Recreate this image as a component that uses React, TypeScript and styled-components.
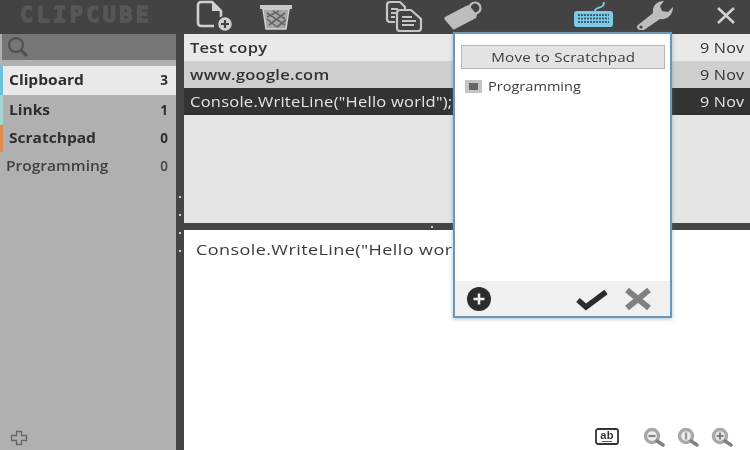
import styled, { createGlobalStyle } from "styled-components";

const GlobalStyle = createGlobalStyle`
  html, body {
    margin: 0;
    padding: 0;
    background: #fff;
  }
`;

const Window = styled.div`
  position: relative;
  display: flex;
  flex-direction: column;
  width: 750px;
  height: 450px;
  overflow: hidden;
  background: #444;
  color: #333;
  font-family: "Open Sans", "Noto Sans", sans-serif;
  filter: blur(0.7px);
`;

// the whole shot is stretched sideways, so text gets stretched with it
const Wide = styled.span<{ $x: number; $origin?: string }>`
  display: inline-block;
  white-space: nowrap;
  transform: scaleX(${(p) => p.$x});
  transform-origin: ${(p) => p.$origin ?? "left"} center;
`;

const Toolbar = styled.header`
  display: flex;
  align-items: center;
  flex: 0 0 34px;
  height: 34px;
  background: #434343;
`;

const Logo = styled.div`
  width: 194px;
  padding-left: 20px;
  box-sizing: border-box;
  color: #575757;
  font-family: "DejaVu Sans Mono", monospace;
  font-size: 22px;
  font-weight: 700;
  text-transform: uppercase;
  letter-spacing: 3.3px;
  line-height: 30px;
  margin-top: -4px;
  -webkit-text-stroke: 1.4px #575757;
`;

const ToolIcon = styled.svg<{ $left: number }>`
  flex: none;
  margin-left: ${(p) => p.$left}px;
  margin-top: -3px;
`;

const Body = styled.div`
  display: flex;
  flex: 1;
  min-height: 0;
`;

const Sidebar = styled.aside`
  display: flex;
  flex-direction: column;
  width: 176px;
  background: #b0b0b0;
`;

const Search = styled.div`
  display: flex;
  align-items: center;
  height: 26px;
  margin-left: 2px;
  padding-left: 4px;
  background: #767676;
`;

const CategoryList = styled.div`
  display: flex;
  flex-direction: column;
  margin-top: 6px;
`;

const Category = styled.div<{ $active?: boolean; $accent?: string; $height: number }>`
  display: flex;
  align-items: center;
  justify-content: space-between;
  height: ${(p) => p.$height}px;
  padding: 0 8px 1px 6px;
  box-sizing: border-box;
  border-left: ${(p) => (p.$accent ? `3px solid ${p.$accent}` : "0")};
  background: ${(p) => (p.$active ? "#e9e9e9" : "transparent")};
  color: #2e2e2e;
  font-size: 13.5px;
  font-weight: ${(p) => (p.$accent ? 700 : 600)};
  opacity: ${(p) => (p.$accent ? 1 : 0.85)};
`;

const AddCategory = styled.svg`
  margin: auto 0 4px 9px;
`;

const Main = styled.main`
  display: flex;
  flex-direction: column;
  flex: 1;
  min-width: 0;
  margin-left: 8px;
`;

const ClipList = styled.div`
  flex: 0 0 189px;
  background: #e5e5e5;
`;

const ClipRow = styled.div<{ $tone: "light" | "mid" | "dark" }>`
  display: flex;
  align-items: center;
  justify-content: space-between;
  height: 27px;
  padding: 0 0 1px 6px;
  box-sizing: border-box;
  background: ${(p) =>
    p.$tone === "dark" ? "#333" : p.$tone === "mid" ? "#cfcfcf" : "#e9e9e9"};
  color: ${(p) => (p.$tone === "dark" ? "#e4e4e4" : "#333")};
  font-size: 14px;
  font-weight: ${(p) => (p.$tone === "dark" ? 500 : 600)};
  letter-spacing: 0.2px;
`;

const ClipDate = styled.span`
  width: 50px;
  font-weight: 500;
`;

const Splitter = styled.div`
  flex: 0 0 7px;
  background: #444;
`;

const Preview = styled.section`
  display: flex;
  flex-direction: column;
  flex: 1;
  background: #fff;
  padding: 9px 0 0 12px;
  color: #3a3a3a;
  font-size: 15px;
  letter-spacing: 0.35px;
`;

const PreviewTools = styled.div`
  display: flex;
  align-items: center;
  margin-top: auto;
  padding: 0 16px 3px 0;
  justify-content: flex-end;
  gap: 10px;
`;

const Grip = styled.span<{ $y: number; $x: number }>`
  position: absolute;
  left: ${(p) => p.$x}px;
  top: ${(p) => p.$y}px;
  width: 2px;
  height: 2px;
  background: #ccc;
`;

const Popup = styled.div`
  position: absolute;
  left: 453px;
  top: 32px;
  display: flex;
  flex-direction: column;
  width: 219px;
  height: 286px;
  box-sizing: border-box;
  border: 2px solid #6a97ba;
  background: #fff;
  box-shadow: 0 1px 4px rgba(90, 130, 160, 0.5);
`;

const MoveButton = styled.div`
  display: flex;
  align-items: center;
  justify-content: center;
  height: 24px;
  margin: 11px 5px 0 6px;
  padding-bottom: 1px;
  box-sizing: border-box;
  border: 1px solid #b5b5b5;
  background: #e3e3e3;
  color: #3c3c3c;
  font-size: 13.5px;
  letter-spacing: 0.2px;
`;

const TagRow = styled.div`
  display: flex;
  align-items: center;
  gap: 6px;
  margin: 8px 0 0 10px;
  color: #3c3c3c;
  font-size: 13px;
`;

const TagBox = styled.span`
  width: 9px;
  height: 7px;
  border: 4px solid #c4c4c4;
  border-width: 3px 4px;
  background: #666;
`;

const PopupFooter = styled.div`
  display: flex;
  align-items: center;
  margin-top: auto;
  height: 35px;
  padding: 0 18px 0 11px;
  background: #f0f0f0;
`;

const FooterSpacer = styled.div`
  flex: 1;
`;

const FooterIcon = styled.svg<{ $left?: number }>`
  flex: none;
  margin-left: ${(p) => p.$left ?? 0}px;
`;

const AbIcon = styled.svg`
  margin-right: 12px;
`;

const Magnifier = ({ sign }: { sign: "-" | "0" | "+" }) => (
  <svg width="24" height="20" viewBox="0 0 24 20">
    <circle cx="10" cy="9" r="6.5" fill="#eee" stroke="#a8a8a8" strokeWidth="3.4" />
    <path d="M15 14l6 4" stroke="#808080" strokeWidth="3.5" strokeLinecap="round" />
    {sign !== "0" && <path d="M6.500 9h7" stroke="#808080" strokeWidth="2.2" />}
    {sign === "+" && <path d="M10 5.500v7" stroke="#808080" strokeWidth="2.2" />}
    {sign === "0" && <path d="M10 5.500v7" stroke="#999" strokeWidth="2.4" />}
  </svg>
);

const categories = [
  { name: "Clipboard", count: 3, accent: "#6cc3d8", active: true, height: 29 },
  { name: "Links", count: 1, accent: "#a5d6d2", height: 30 },
  { name: "Scratchpad", count: 0, accent: "#e08a4c", height: 27 },
  { name: "Programming", count: 0, height: 29 },
];

const clips: { text: string; tone: "light" | "mid" | "dark" }[] = [
  { text: "Test copy", tone: "light" },
  { text: "www.google.com", tone: "mid" },
  { text: 'Console.WriteLine("Hello world");', tone: "dark" },
];

export default function App() {
  return (
    <>
      <GlobalStyle />
      <Window>
        <Toolbar>
          <Logo>ClipCube</Logo>
          <ToolIcon $left={1} width="40" height="32" viewBox="0 0 40 32">
            <path d="M19 26H6a3 3 0 01-3-3V5a3 3 0 013-3h11l9 9v6" fill="none" stroke="#d0d0d0" strokeWidth="2.600" strokeLinejoin="round" />
            <path d="M17 3v8h8" fill="#d0d0d0" />
            <circle cx="30" cy="24" r="7.500" fill="#d0d0d0" stroke="#434343" strokeWidth="1.500" />
            <path d="M26 24h8M30 20v8" stroke="#434343" strokeWidth="2.200" />
          </ToolIcon>
          <ToolIcon $left={24} width="34" height="28" viewBox="0 0 34 28">
            <path d="M1 3h32v4H1z" fill="#c8c8c8" />
            <path d="M4 7h26l-3 20H7z" fill="#a8a8a8" stroke="#cfcfcf" strokeWidth="1.500" />
            <path d="M8 11l18 12M14 9l12 8M8 17l10 8M26 11L10 23M20 9L8 15M27 18l-9 7" stroke="#666" strokeWidth="1.600" />
          </ToolIcon>
          <ToolIcon $left={91} width="40" height="32" viewBox="0 0 40 32">
            <path d="M3 5a3 3 0 013-3h10l5 5v3M3 5v14a3 3 0 003 3h5" fill="none" stroke="#c6c6c6" strokeWidth="2.200" />
            <path d="M7 9h7M7 13h5M7 17h4" stroke="#c6c6c6" strokeWidth="2" />
            <path d="M16 10h11l10 9v9a3 3 0 01-3 3H16a3 3 0 01-3-3V13a3 3 0 013-3z" fill="#434343" stroke="#c6c6c6" strokeWidth="2.200" />
            <path d="M18 17h10M18 21h14M18 25h12" stroke="#c6c6c6" strokeWidth="2" />
          </ToolIcon>
          <ToolIcon $left={18} width="42" height="32" viewBox="0 0 42 32">
            <path d="M3 17L24 6l3-1 8 10-1 3-21 11a2 2 0 01-3-1L3 20a2 2 0 010-3z" fill="#bdbdbd" />
            <circle cx="33" cy="8" r="5.500" fill="none" stroke="#bdbdbd" strokeWidth="2.200" />
          </ToolIcon>
          <ToolIcon $left={89} width="42" height="28" viewBox="0 0 42 28">
            <path d="M22 9c0-3 3-3 6-4s3-3 3-5" fill="none" stroke="#7ccbe8" strokeWidth="1.800" />
            <rect x="1" y="9" width="39" height="16" rx="3" fill="#7ccbe8" />
            <path d="M5 13h31M5 16.500h31M5 20h31" stroke="#3d5f6c" strokeWidth="1.800" strokeDasharray="2 1" />
          </ToolIcon>
          <ToolIcon $left={20} width="42" height="34" viewBox="0 0 42 34">
            <path d="M5 31c-3 0-4-4-2-5l15-12c-1-6 3-12 11-12l-4 5 2 5 6 1 5-5c0 8-6 13-13 12L9 31z" fill="#bdbdbd" />
            <circle cx="6" cy="28" r="1.600" fill="#444" />
          </ToolIcon>
          <ToolIcon $left={38} width="22" height="20" viewBox="0 0 22 20">
            <path d="M3 2l16 15M19 2L3 17" stroke="#d0d0d0" strokeWidth="2.600" />
          </ToolIcon>
        </Toolbar>
        <Body>
          <Sidebar>
            <Search>
              <svg width="24" height="24" viewBox="0 0 24 24">
                <circle cx="10" cy="10" r="7" fill="none" stroke="#4f4f4f" strokeWidth="2" />
                <path d="M15 15l6 6" stroke="#4f4f4f" strokeWidth="3" />
              </svg>
            </Search>
            <CategoryList>
              {categories.map((c) => (
                <Category key={c.name} $active={c.active} $accent={c.accent} $height={c.height}>
                  <Wide $x={1.15}>{c.name}</Wide>
                  <span>{c.count}</span>
                </Category>
              ))}
            </CategoryList>
            <AddCategory width="20" height="16" viewBox="0 0 20 16">
              <path d="M7.500 1.500h5v4h5v5h-5v4h-5v-4h-5v-5h5z" fill="none" stroke="#666" strokeWidth="1.300" />
            </AddCategory>
          </Sidebar>
          <Main>
            <ClipList>
              {clips.map((c) => (
                <ClipRow key={c.text} $tone={c.tone}>
                  <Wide $x={1.18}>{c.text}</Wide>
                  <ClipDate>
                    <Wide $x={1.15}>9 Nov</Wide>
                  </ClipDate>
                </ClipRow>
              ))}
            </ClipList>
            <Splitter />
            <Preview>
              <div>
                <Wide $x={1.2}>Console.WriteLine("Hello world");</Wide>
              </div>
              <PreviewTools>
                <AbIcon width="26" height="20" viewBox="0 0 26 20">
                  <rect x="2" y="2" width="22" height="15" rx="2" fill="#fff" stroke="#333" strokeWidth="1.800" />
                  <text x="13" y="12" textAnchor="middle" fontSize="11" fontWeight="700" fontFamily="Liberation Sans" fill="#333">ab</text>
                  <path d="M8 14.500h10" stroke="#555" strokeWidth="1" />
                </AbIcon>
                <Magnifier sign="-" />
                <Magnifier sign="0" />
                <Magnifier sign="+" />
              </PreviewTools>
            </Preview>
          </Main>
        </Body>
        <Grip $x={179} $y={196} />
        <Grip $x={179} $y={214} />
        <Grip $x={179} $y={232} />
        <Grip $x={179} $y={250} />
        <Grip $x={431} $y={226} />
        <Popup>
          <MoveButton>
            <Wide $x={1.12} $origin="center">Move to Scratchpad</Wide>
          </MoveButton>
          <TagRow>
            <TagBox />
            <Wide $x={1.12}>Programming</Wide>
          </TagRow>
          <PopupFooter>
            <FooterIcon width="26" height="24" viewBox="0 0 26 24">
              <circle cx="13" cy="12" r="12" fill="#2c2c2c" />
              <path d="M7.500 12h11M13 6.500v11" stroke="#eee" strokeWidth="2.600" />
            </FooterIcon>
            <FooterSpacer />
            <FooterIcon width="34" height="24" viewBox="0 0 34 24">
              <path d="M3 13l8 7L31 5" fill="none" stroke="#2c2c2c" strokeWidth="5.500" />
            </FooterIcon>
            <FooterIcon $left={15} width="28" height="24" viewBox="0 0 28 24">
              <path d="M3 3l22 18M25 3L3 21" stroke="#808080" strokeWidth="6" />
            </FooterIcon>
          </PopupFooter>
        </Popup>
      </Window>
    </>
  );
}
